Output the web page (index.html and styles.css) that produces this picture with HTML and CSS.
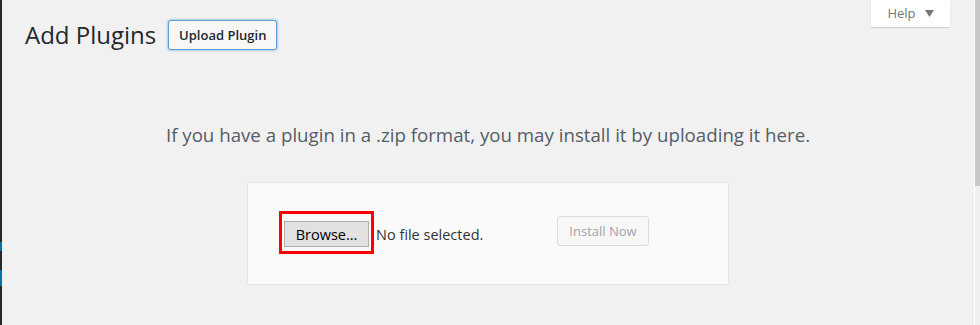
FILE: index.html
```html
<!DOCTYPE html>
<html lang="en">
<head>
    <meta charset="UTF-8">
    <title>Add Plugins</title>
    <link rel="stylesheet" href="styles.css">
</head>
<body>
    <div class="admin-menu">
        <span class="menu-mark mark-one"></span>
        <span class="menu-mark mark-two"></span>
    </div>
    <div class="content">
        <div class="help-tab">
            <span>Help</span>
            <svg class="help-arrow" width="9" height="7" viewBox="0 0 9 7"><path d="M0 0 H9 L4.5 7 Z" fill="#72777c"/></svg>
        </div>
        <div class="wrap">
            <div class="page-header">
                <h1>Add Plugins</h1>
                <button class="upload-toggle">Upload Plugin</button>
            </div>
            <p class="install-help">If you have a plugin in a .zip format, you may install it by uploading it here.</p>
            <form class="upload-form" onsubmit="return false">
                <div class="file-input">
                    <span class="highlight"><span class="browse-button">Browse...</span></span>
                    <span class="file-name">No file selected.</span>
                </div>
                <button class="install-button" disabled>Install Now</button>
            </form>
        </div>
    </div>
    <div class="scrollbar">
        <div class="scroll-thumb"></div>
    </div>
</body>
</html>
```

FILE: styles.css
```css
html, body {
    height: 100%;
}
body {
    margin: 0;
    display: flex;
    background-color: #f1f1f1;
    font-family: "Open Sans", "Noto Sans", sans-serif;
    color: #23282d;
    overflow: hidden;
}
.admin-menu {
    width: 2px;
    background-color: #23282d;
    position: relative;
}
.menu-mark {
    position: absolute;
    left: 0;
    width: 2px;
    background-color: #0073aa;
}
.mark-one {
    top: 242px;
    height: 9px;
}
.mark-two {
    top: 270px;
    height: 16px;
}
.content {
    flex: 1;
    position: relative;
}
.help-tab {
    position: absolute;
    top: 0;
    right: 24px;
    width: 79px;
    height: 27px;
    box-sizing: border-box;
    background-color: #fff;
    box-shadow: 0 1px 1px rgba(0,0,0,0.12);
    display: flex;
    align-items: center;
    justify-content: center;
    gap: 9px;
    padding-bottom: 2px;
    font-size: 13px;
    color: #72777c;
}
.help-arrow {
    margin-top: 1px;
}
.wrap {
    padding: 20px 23px 0 23px;
}
.page-header {
    display: flex;
    align-items: center;
    gap: 12px;
}
h1 {
    margin: 0;
    font-size: 24px;
    font-weight: 400;
    line-height: 30px;
}
.upload-toggle {
    height: 30px;
    width: 109px;
    padding: 0;
    background-color: #f7f7f7;
    border: 1px solid #5b9dd9;
    border-radius: 3px;
    box-shadow: 0 0 3px rgba(0,115,170,0.6);
    font-family: inherit;
    font-size: 13px;
    font-weight: 600;
    color: #23282d;
}
.install-help {
    margin: 70px 0 0;
    text-align: center;
    font-size: 18.7px;
    line-height: 30px;
    color: #555d66;
}
.upload-form {
    width: 482px;
    margin: 32px auto 0;
    padding: 28px 0 30px 31px;
    box-sizing: border-box;
    background-color: #fafafa;
    border: 1px solid #e5e5e5;
    display: flex;
    align-items: center;
}
.file-input {
    display: flex;
    align-items: center;
    gap: 2px;
    width: 278px;
}
.highlight {
    display: inline-flex;
    padding: 7px 2px 4px;
    border: 3px solid #f00;
}
.browse-button {
    width: 85px;
    height: 26px;
    box-sizing: border-box;
    display: flex;
    align-items: center;
    justify-content: center;
    background-color: #e1e1e1;
    border: 1px solid #adadad;
    font-size: 14.5px;
    color: #000;
}
.file-name {
    font-size: 14.5px;
    color: #333;
    padding-top: 3px;
}
.install-button {
    height: 30px;
    width: 92px;
    padding: 0;
    margin-top: -3px;
    background-color: #f7f7f7;
    border: 1px solid #ddd;
    border-radius: 3px;
    font-family: inherit;
    font-size: 13px;
    color: #a0a5aa;
}
.scrollbar {
    width: 5px;
    background-color: #f0f0f0;
    border-left: 1px solid #fff;
}
.scroll-thumb {
    height: 186px;
    background-color: #c8c8c8;
}
```
